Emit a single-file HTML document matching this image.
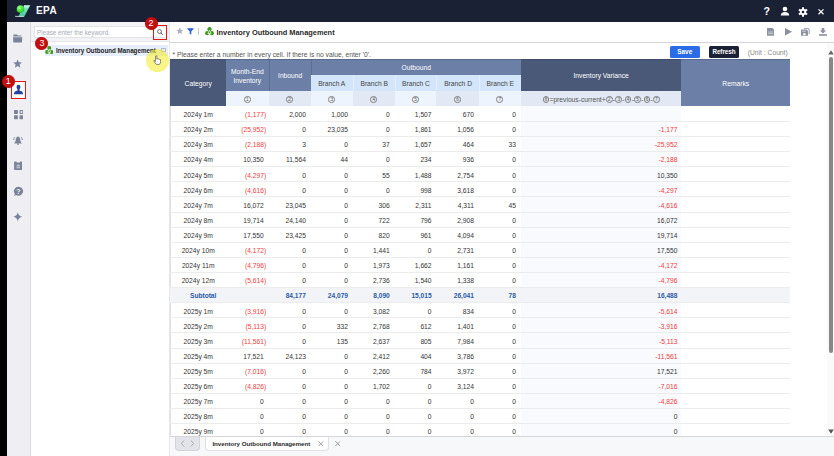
<!DOCTYPE html>
<html><head><meta charset="utf-8">
<style>
*{box-sizing:border-box}
html,body{margin:0;padding:0}
body{width:834px;height:456px;overflow:hidden;position:relative;background:#fff;font-family:"Liberation Sans",sans-serif;color:#333}
.abs{position:absolute}
#blk{left:0;top:0;width:7px;height:456px;background:#000}
#hdr{left:7px;top:0;width:827px;height:21.7px;background:#1b2135}
#epa{left:36px;top:5.4px;font-size:10px;font-weight:bold;color:#fff;letter-spacing:0.45px}
#side{left:7px;top:21.7px;width:23px;height:435px;background:#eeeef3}
#sideb{left:29.9px;top:21.7px;width:1px;height:435px;background:#d9dae0}
#spanel{left:30.9px;top:21.7px;width:138.4px;height:435px;background:#fff}
#sbar{left:30.9px;top:21.7px;width:138.4px;height:19px;background:#f3f3f6}
#sinput{left:33.5px;top:25.6px;width:133.5px;height:12.6px;background:#fff;border:1px solid #e2e3e8;font-size:6.3px;color:#a8abb5;padding:2.4px 0 0 2.6px}
#tree{left:45px;top:44.8px;width:122.6px;height:11.7px;background:#e7eefb}
#treet{left:56px;top:46.8px;font-size:6.27px;font-weight:bold;color:#222}
#vsep{left:169.2px;top:21.7px;width:1.2px;height:435px;background:#e6e7eb}
#tbar{left:170.4px;top:41.6px;width:664px;height:1.2px;background:#d4d5da}
#title{left:216.5px;top:27.6px;font-size:7.41px;font-weight:bold;color:#2a2a2a}
#note{left:172.5px;top:50.8px;font-size:6.75px;color:#555}
#save{left:669.8px;top:46.3px;width:29.9px;height:11.4px;background:#2b6ce6;border-radius:1.5px;color:#fff;font-size:6.5px;font-weight:bold;text-align:center;line-height:11.4px}
#refresh{left:709px;top:46.3px;width:29.9px;height:11.4px;background:#1b2135;border-radius:1.5px;color:#fff;font-size:6.3px;text-align:center;line-height:11.6px;font-weight:bold;letter-spacing:-0.05px}
#unit{left:747.7px;top:48.9px;font-size:6.74px;color:#888}
/* table */
#thead{left:170.4px;top:59.2px;width:619.6px;height:47.1px}
.h{position:absolute;color:#fff;font-size:6.7px;text-align:center;display:flex;align-items:center;justify-content:center;line-height:1.35;padding-top:1.4px}
.dk{background:#4a5977}
.md{background:#6c80a7}
.lt{background:#d3e5fa;color:#444}
.cl{background:#edf4fd;color:#555}
.cd{background:#e2e9f4;color:#555}
#tbody{left:170.4px;top:106.3px;width:619.6px;height:330px;overflow:hidden}
table{border-collapse:collapse;table-layout:fixed;width:619.6px}
td{height:15.115px;padding:2.1px 0 0 0;font-size:6.7px;color:#333;border-bottom:1px solid #ececef;white-space:nowrap;overflow:hidden;line-height:11.6px}
td.c0{text-align:center}
td.n{text-align:right;padding-right:4.8px}
td.me.neg{padding-right:2.4px}
td.neg{color:#f23b3b}
td.var{background:#f8fafe;padding-right:4px}
tr.sub td{background:#f3f4f7;color:#2b5aa8;font-weight:bold;font-size:6.6px}
.ci{display:inline-block;width:6.6px;height:6.6px;border:0.8px solid #808080;border-radius:50%;font-size:4.6px;line-height:5.1px;text-align:center;color:#555;vertical-align:middle;margin:0 0.3px;position:relative;top:0.3px}
#tleft{left:169.6px;top:105.7px;width:1px;height:330px;background:#e0e0e4}
#bbar{left:170.4px;top:435.5px;width:664px;height:20.5px;background:#f7f8fa;border-top:1.6px solid #d6d7dc}
#scrtrack{left:827px;top:43px;width:7px;height:392.5px;background:#fafafa}
#thumb{left:828.7px;top:57px;width:4.1px;height:296px;background:#888;border-radius:2px}
.badge{position:absolute;width:13px;height:13px;border-radius:50%;background:#c30f0f;color:#fff;font-size:9px;text-align:center;line-height:13px;box-shadow:0 0 1px rgba(0,0,0,.4)}
.rbox{position:absolute;border:1.3px solid #e01818}
#yellow{left:146px;top:48.5px;width:23.2px;height:23.2px;border-radius:50%;background:rgba(243,236,40,0.56)}
</style></head><body>
<div id="blk" class="abs"></div>
<div id="hdr" class="abs"></div>
<svg class="abs" style="left:12px;top:2px" width="22" height="18" viewBox="0 0 22 18">
 <defs><linearGradient id="lg" x1="0" y1="0" x2="0" y2="1"><stop offset="0" stop-color="#e6fff6"/><stop offset="0.25" stop-color="#7fe3c4"/><stop offset="1" stop-color="#3cc79a"/></linearGradient>
 <radialGradient id="rg" cx="0.35" cy="0.3" r="0.75"><stop offset="0" stop-color="#c8ffb8"/><stop offset="0.35" stop-color="#5af04a"/><stop offset="1" stop-color="#2cbf2a"/></radialGradient></defs>
 <path d="M12.2 3.3 L18.2 3.3 L12.2 14.7 L6.3 14.7 Z" fill="url(#lg)"/>
 <rect x="3.2" y="13.9" width="8.6" height="0.9" fill="#d8dce6"/>
 <circle cx="8.5" cy="7.1" r="3.8" fill="url(#rg)"/>
</svg>
<div id="epa" class="abs">EPA</div>
<!-- header right icons -->
<div class="abs" style="left:763.4px;top:5.2px;font-size:10.6px;font-weight:bold;color:#fff">?</div>
<svg class="abs" style="left:779.5px;top:6px" width="10" height="10" viewBox="0 0 10 10"><circle cx="5" cy="3" r="2.3" fill="#fff"/><path d="M0.8 9.5 Q0.8 6 5 6 Q9.2 6 9.2 9.5 Z" fill="#fff"/></svg>
<svg class="abs" style="left:797.5px;top:6.6px" width="10" height="10" viewBox="0 0 10 10"><g fill="#fff"><circle cx="5" cy="5" r="3.2"/><rect x="4" y="0.3" width="2" height="9.4"/><rect x="4" y="0.3" width="2" height="9.4" transform="rotate(60 5 5)"/><rect x="4" y="0.3" width="2" height="9.4" transform="rotate(120 5 5)"/></g><circle cx="5" cy="5" r="1.3" fill="#1b2135"/></svg>
<svg class="abs" style="left:817.8px;top:9px" width="6" height="5.6" viewBox="0 0 6 5.6"><path d="M0.5 0.4L5.5 5.2M5.5 0.4L0.5 5.2" stroke="#fff" stroke-width="1.2"/></svg>

<div id="side" class="abs"></div>
<div id="sideb" class="abs"></div>
<!-- sidebar icons -->
<svg class="abs" style="left:13.3px;top:33.6px" width="9.5" height="9" viewBox="0 0 9.5 9"><path d="M0.4 0.4 H3.9 L4.8 1.4 H8.4 V2.6 H0.4Z M0 3.2 H9.3 L8.9 8.5 H0.4Z" fill="#7b8399"/></svg>
<svg class="abs" style="left:13.3px;top:59.2px" width="9.2" height="9.2" viewBox="0 0 24 24"><path d="M12 1 L15.2 8.6 L23.3 9.2 L17.1 14.5 L19.1 22.6 L12 18.2 L4.9 22.6 L6.9 14.5 L0.7 9.2 L8.8 8.6Z" fill="#7b8399"/></svg>
<div class="abs" style="left:11px;top:81px;width:15px;height:17.7px;background:#fff;border:1.3px solid #e01818"></div>
<svg class="abs" style="left:13px;top:84px" width="11" height="11" viewBox="0 0 11 11"><ellipse cx="5.5" cy="3.1" rx="2" ry="2.4" fill="#2442a0"/><path d="M4.5 5 H6.5 V6.4 Q9.8 6.9 10 9.8 V10.2 H1 V9.8 Q1.2 6.9 4.5 6.4Z" fill="#2442a0"/></svg>
<svg class="abs" style="left:13.5px;top:110.4px" width="9.4" height="9.2" viewBox="0 0 9.4 9.2"><g fill="#7b8399"><rect x="0" y="0" width="3.9" height="3.9" rx="0.6"/><rect x="5.5" y="0" width="3.9" height="3.9" rx="1"/><rect x="0" y="5.3" width="3.9" height="3.9" rx="0.6"/><rect x="5.5" y="5.3" width="3.9" height="3.9" rx="0.6"/></g><circle cx="7.45" cy="1.95" r="1" fill="#eeeef3"/></svg>
<svg class="abs" style="left:12.8px;top:135.6px" width="10" height="9.5" viewBox="0 0 10 9.5"><path d="M5 0.6 Q6.6 0.6 7.1 3 L7.6 5.6 L8.8 7.4 H1.2 L2.4 5.6 L2.9 3 Q3.4 0.6 5 0.6Z" fill="#7b8399"/><rect x="4.2" y="7.4" width="1.6" height="1.4" fill="#7b8399"/><path d="M1.9 1.2 Q0.8 2.3 0.7 4 M8.1 1.2 Q9.2 2.3 9.3 4" stroke="#7b8399" stroke-width="0.9" fill="none"/></svg>
<svg class="abs" style="left:13.8px;top:161.4px" width="8.6" height="9" viewBox="0 0 8.6 9"><path d="M0.8 0.6 H2.6 V1.5 H6 V0.6 H7.8 Q8.5 0.6 8.5 1.3 V8.2 Q8.5 8.9 7.8 8.9 H0.8 Q0.1 8.9 0.1 8.2 V1.3 Q0.1 0.6 0.8 0.6Z" fill="#7b8399"/><rect x="2.6" y="3.6" width="3.4" height="3.8" fill="#b9bdca"/><rect x="2.6" y="5.2" width="3.4" height="0.4" fill="#8d94a8"/></svg>
<svg class="abs" style="left:12.5px;top:185.8px" width="11" height="11" viewBox="0 0 11 11"><path d="M5.5 0.8 A4.5 4.5 0 1 1 3 9 L1.2 10.3 L1.8 8 A4.5 4.5 0 0 1 5.5 0.8Z" fill="#7b8399"/><text x="5.5" y="8" font-size="7" font-weight="bold" fill="#eeeef3" text-anchor="middle" font-family="Liberation Sans">?</text></svg>
<svg class="abs" style="left:13px;top:212.3px" width="9.6" height="9.6" viewBox="0 0 11 11"><path d="M5.5 0.3 Q6.3 4.7 10.7 5.5 Q6.3 6.3 5.5 10.7 Q4.7 6.3 0.3 5.5 Q4.7 4.7 5.5 0.3Z" fill="#7b8399"/></svg>

<div id="spanel" class="abs"></div>
<div id="sbar" class="abs"></div>
<div id="sinput" class="abs">Please enter the keyword.</div>
<div class="abs" style="left:30.9px;top:40.7px;width:138.4px;height:1px;background:#e4e5ea"></div>
<svg class="abs" style="left:156.8px;top:29.4px" width="6.2" height="6.2" viewBox="0 0 8 8"><circle cx="3.3" cy="3.3" r="2.5" fill="none" stroke="#555" stroke-width="1.1"/><path d="M5.1 5.1L7.5 7.5" stroke="#555" stroke-width="1.2"/></svg>
<div id="tree" class="abs"></div>
<svg class="abs" style="left:44.8px;top:45.9px" width="8.6" height="8.2" viewBox="0 0 9 8.6"><g fill="#3c9a1c"><circle cx="4.5" cy="2.2" r="2.1"/><circle cx="2.2" cy="6.2" r="2.1"/><circle cx="6.8" cy="6.2" r="2.1"/><path d="M4.5 2.2 L6.8 6.2 H2.2Z"/></g><path d="M4.5 3.3 L6.1 6.5 H2.9Z" fill="none" stroke="#e4f3dc" stroke-width="0.85"/></svg>
<div id="treet" class="abs">Inventory Outbound Management</div>
<div class="abs" style="left:160.7px;top:48.4px;width:5px;height:4px;border:0.8px solid #b8bcc6;background:#e8eaf0"></div>

<div id="vsep" class="abs"></div>
<!-- toolbar -->
<svg class="abs" style="left:175.6px;top:27.3px" width="7.6" height="7.6" viewBox="0 0 24 24"><path d="M12 1 L15.2 8.6 L23.3 9.2 L17.1 14.5 L19.1 22.6 L12 18.2 L4.9 22.6 L6.9 14.5 L0.7 9.2 L8.8 8.6Z" fill="#aeb1bb"/></svg>
<svg class="abs" style="left:186.6px;top:27.8px" width="7" height="7" viewBox="0 0 7 7"><path d="M0.6 0.2H6.4Q6.9 0.2 6.7 0.8L4.3 3.4V6.6L2.7 5.9V3.4L0.3 0.8Q0.1 0.2 0.6 0.2Z" fill="#2d5fe0"/></svg>
<div class="abs" style="left:198.2px;top:28px;width:0.8px;height:6.5px;background:#c5c7cf"></div>
<svg class="abs" style="left:204.5px;top:27.2px" width="9" height="8.6" viewBox="0 0 9 8.6"><g fill="#3c9a1c"><circle cx="4.5" cy="2.2" r="2.1"/><circle cx="2.2" cy="6.2" r="2.1"/><circle cx="6.8" cy="6.2" r="2.1"/><path d="M4.5 2.2 L6.8 6.2 H2.2Z"/></g><path d="M4.5 3.3 L6.1 6.5 H2.9Z" fill="none" stroke="#e4f3dc" stroke-width="0.85"/></svg>
<div id="title" class="abs">Inventory Outbound Management</div>
<!-- toolbar right icons -->
<svg class="abs" style="left:766.7px;top:27.9px" width="7.4" height="7.8" viewBox="0 0 7.4 7.8"><path d="M0.6 0 H5.4 L7.4 2 V7.2 Q7.4 7.8 6.8 7.8 H0.6 Q0 7.8 0 7.2 V0.6 Q0 0 0.6 0Z" fill="#8d909e"/><rect x="1.2" y="3.6" width="5" height="0.8" fill="#d6d8de"/><rect x="1.2" y="5.3" width="5" height="0.8" fill="#d6d8de"/></svg>
<svg class="abs" style="left:784.9px;top:28.2px" width="7" height="7.6" viewBox="0 0 7 7.6"><path d="M0 0 L7 3.8 L0 7.6Z" fill="#8d909e"/></svg>
<svg class="abs" style="left:801.3px;top:27.9px" width="8.8" height="7.8" viewBox="0 0 8.8 7.8"><path d="M3 0 H7.4 L8.8 1.4 V6 H7.6 V2 L6.6 1.1 H3Z" fill="#a9acb8"/><path d="M0.6 1.6 H5.6 L7 3 V7.2 Q7 7.8 6.4 7.8 H0.6 Q0 7.8 0 7.2 V2.2 Q0 1.6 0.6 1.6Z" fill="#8d909e"/><rect x="2.2" y="5.2" width="2.4" height="2" fill="#fff"/><rect x="1.2" y="2.6" width="3.4" height="1.2" fill="#c9cbd3"/></svg>
<svg class="abs" style="left:819px;top:27.9px" width="8" height="7.8" viewBox="0 0 8 7.8"><path d="M2.7 0 H5.3 V2.6 H7.2 L4 5.6 L0.8 2.6 H2.7Z" fill="#8d909e"/><rect x="0" y="6.2" width="8" height="1.6" fill="#8d909e"/></svg>
<div id="tbar" class="abs"></div>

<div id="note" class="abs">* Please enter a number in every cell. If there is no value, enter '0'.</div>
<div id="save" class="abs">Save</div>
<div id="refresh" class="abs">Refresh</div>
<div id="unit" class="abs">(Unit : Count)</div>

<div id="thead" class="abs">
 <div class="h dk" style="left:0;top:0;width:55.6px;height:47.1px">Category</div>
 <div class="h md" style="left:55.6px;top:0;width:42.6px;height:31.6px">Month-End<br>Inventory</div>
 <div class="h md" style="left:98.2px;top:0;width:42.1px;height:31.6px;border-left:0.6px solid #5d6e96">Inbound</div>
 <div class="h md" style="left:140.3px;top:0;width:210.1px;height:15.6px;border-left:0.6px solid #5d6e96">Outbound</div>
 <div class="h lt" style="left:140.3px;top:15.6px;width:42.1px;height:16px">Branch A</div>
 <div class="h lt" style="left:182.4px;top:15.6px;width:41.8px;height:16px;border-left:0.6px solid #e4eefb">Branch B</div>
 <div class="h lt" style="left:224.2px;top:15.6px;width:41.8px;height:16px;border-left:0.6px solid #e4eefb">Branch C</div>
 <div class="h lt" style="left:266px;top:15.6px;width:42.4px;height:16px;border-left:0.6px solid #e4eefb">Branch D</div>
 <div class="h lt" style="left:308.4px;top:15.6px;width:42px;height:16px;border-left:0.6px solid #e4eefb">Branch E</div>
 <div class="h dk" style="left:350.4px;top:0;width:160.7px;height:31.6px">Inventory Variance</div>
 <div class="h md" style="left:511.1px;top:0;width:108.5px;height:47.1px">Remarks</div>
 <div class="abs" style="left:0;top:0;width:619.6px;height:1.1px;background:rgba(20,30,60,0.22);z-index:2"></div>
 <div class="h cl" style="left:55.6px;top:31.6px;width:42.6px;height:15.5px"><span class="ci">1</span></div>
 <div class="h cd" style="left:98.2px;top:31.6px;width:42.1px;height:15.5px"><span class="ci">2</span></div>
 <div class="h cl" style="left:140.3px;top:31.6px;width:42.1px;height:15.5px"><span class="ci">3</span></div>
 <div class="h cd" style="left:182.4px;top:31.6px;width:41.8px;height:15.5px"><span class="ci">4</span></div>
 <div class="h cl" style="left:224.2px;top:31.6px;width:41.8px;height:15.5px"><span class="ci">5</span></div>
 <div class="h cd" style="left:266px;top:31.6px;width:42.4px;height:15.5px"><span class="ci">6</span></div>
 <div class="h cl" style="left:308.4px;top:31.6px;width:42px;height:15.5px"><span class="ci">7</span></div>
 <div class="h cd" style="left:350.4px;top:31.6px;width:160.7px;height:15.5px"><span class="ci">8</span>=previous-current+<span class="ci">2</span>-<span class="ci">3</span>-<span class="ci">4</span>-<span class="ci">5</span>-<span class="ci">6</span>-<span class="ci">7</span></div>
</div>

<div id="tleft" class="abs"></div>
<div id="tbody" class="abs">
<table>
<colgroup><col style="width:55.6px"><col style="width:42.6px"><col style="width:42.1px"><col style="width:42.1px"><col style="width:41.8px"><col style="width:41.8px"><col style="width:42.4px"><col style="width:42px"><col style="width:160.7px"><col style="width:108.5px"></colgroup>
<tr><td class="c0">2024y 1m</td><td class="n me neg">(1,177)</td><td class="n">2,000</td><td class="n">1,000</td><td class="n">0</td><td class="n">1,507</td><td class="n">670</td><td class="n">0</td><td class="n var"></td><td class="rem"></td></tr>
<tr><td class="c0">2024y 2m</td><td class="n me neg">(25,952)</td><td class="n">0</td><td class="n">23,035</td><td class="n">0</td><td class="n">1,861</td><td class="n">1,056</td><td class="n">0</td><td class="n var neg">-1,177</td><td class="rem"></td></tr>
<tr><td class="c0">2024y 3m</td><td class="n me neg">(2,188)</td><td class="n">3</td><td class="n">0</td><td class="n">37</td><td class="n">1,657</td><td class="n">464</td><td class="n">33</td><td class="n var neg">-25,952</td><td class="rem"></td></tr>
<tr><td class="c0">2024y 4m</td><td class="n me">10,350</td><td class="n">11,564</td><td class="n">44</td><td class="n">0</td><td class="n">234</td><td class="n">936</td><td class="n">0</td><td class="n var neg">-2,188</td><td class="rem"></td></tr>
<tr><td class="c0">2024y 5m</td><td class="n me neg">(4,297)</td><td class="n">0</td><td class="n">0</td><td class="n">55</td><td class="n">1,488</td><td class="n">2,754</td><td class="n">0</td><td class="n var">10,350</td><td class="rem"></td></tr>
<tr><td class="c0">2024y 6m</td><td class="n me neg">(4,616)</td><td class="n">0</td><td class="n">0</td><td class="n">0</td><td class="n">998</td><td class="n">3,618</td><td class="n">0</td><td class="n var neg">-4,297</td><td class="rem"></td></tr>
<tr><td class="c0">2024y 7m</td><td class="n me">16,072</td><td class="n">23,045</td><td class="n">0</td><td class="n">306</td><td class="n">2,311</td><td class="n">4,311</td><td class="n">45</td><td class="n var neg">-4,616</td><td class="rem"></td></tr>
<tr><td class="c0">2024y 8m</td><td class="n me">19,714</td><td class="n">24,140</td><td class="n">0</td><td class="n">722</td><td class="n">796</td><td class="n">2,908</td><td class="n">0</td><td class="n var">16,072</td><td class="rem"></td></tr>
<tr><td class="c0">2024y 9m</td><td class="n me">17,550</td><td class="n">23,425</td><td class="n">0</td><td class="n">820</td><td class="n">961</td><td class="n">4,094</td><td class="n">0</td><td class="n var">19,714</td><td class="rem"></td></tr>
<tr><td class="c0">2024y 10m</td><td class="n me neg">(4,172)</td><td class="n">0</td><td class="n">0</td><td class="n">1,441</td><td class="n">0</td><td class="n">2,731</td><td class="n">0</td><td class="n var">17,550</td><td class="rem"></td></tr>
<tr><td class="c0">2024y 11m</td><td class="n me neg">(4,796)</td><td class="n">0</td><td class="n">0</td><td class="n">1,973</td><td class="n">1,662</td><td class="n">1,161</td><td class="n">0</td><td class="n var neg">-4,172</td><td class="rem"></td></tr>
<tr><td class="c0">2024y 12m</td><td class="n me neg">(5,614)</td><td class="n">0</td><td class="n">0</td><td class="n">2,736</td><td class="n">1,540</td><td class="n">1,338</td><td class="n">0</td><td class="n var neg">-4,796</td><td class="rem"></td></tr>
<tr class="sub"><td class="c0" style="padding-left:10px">Subtotal</td><td class="n me"></td><td class="n">84,177</td><td class="n">24,079</td><td class="n">8,090</td><td class="n">15,015</td><td class="n">26,041</td><td class="n">78</td><td class="n var">16,488</td><td class="rem"></td></tr>
<tr><td class="c0">2025y 1m</td><td class="n me neg">(3,916)</td><td class="n">0</td><td class="n">0</td><td class="n">3,082</td><td class="n">0</td><td class="n">834</td><td class="n">0</td><td class="n var neg">-5,614</td><td class="rem"></td></tr>
<tr><td class="c0">2025y 2m</td><td class="n me neg">(5,113)</td><td class="n">0</td><td class="n">332</td><td class="n">2,768</td><td class="n">612</td><td class="n">1,401</td><td class="n">0</td><td class="n var neg">-3,916</td><td class="rem"></td></tr>
<tr><td class="c0">2025y 3m</td><td class="n me neg">(11,561)</td><td class="n">0</td><td class="n">135</td><td class="n">2,637</td><td class="n">805</td><td class="n">7,984</td><td class="n">0</td><td class="n var neg">-5,113</td><td class="rem"></td></tr>
<tr><td class="c0">2025y 4m</td><td class="n me">17,521</td><td class="n">24,123</td><td class="n">0</td><td class="n">2,412</td><td class="n">404</td><td class="n">3,786</td><td class="n">0</td><td class="n var neg">-11,561</td><td class="rem"></td></tr>
<tr><td class="c0">2025y 5m</td><td class="n me neg">(7,016)</td><td class="n">0</td><td class="n">0</td><td class="n">2,260</td><td class="n">784</td><td class="n">3,972</td><td class="n">0</td><td class="n var">17,521</td><td class="rem"></td></tr>
<tr><td class="c0">2025y 6m</td><td class="n me neg">(4,826)</td><td class="n">0</td><td class="n">0</td><td class="n">1,702</td><td class="n">0</td><td class="n">3,124</td><td class="n">0</td><td class="n var neg">-7,016</td><td class="rem"></td></tr>
<tr><td class="c0">2025y 7m</td><td class="n me">0</td><td class="n">0</td><td class="n">0</td><td class="n">0</td><td class="n">0</td><td class="n">0</td><td class="n">0</td><td class="n var neg">-4,826</td><td class="rem"></td></tr>
<tr><td class="c0">2025y 8m</td><td class="n me">0</td><td class="n">0</td><td class="n">0</td><td class="n">0</td><td class="n">0</td><td class="n">0</td><td class="n">0</td><td class="n var">0</td><td class="rem"></td></tr>
<tr><td class="c0">2025y 9m</td><td class="n me">0</td><td class="n">0</td><td class="n">0</td><td class="n">0</td><td class="n">0</td><td class="n">0</td><td class="n">0</td><td class="n var">0</td><td class="rem"></td></tr>
</table>
</div>
<div id="scrtrack" class="abs"></div>
<svg class="abs" style="left:827.5px;top:49.5px" width="6" height="5" viewBox="0 0 6 5"><path d="M3 0.3L5.8 4.5H0.2Z" fill="#666"/></svg>
<div id="thumb" class="abs"></div>
<svg class="abs" style="left:827.5px;top:429px" width="6" height="5" viewBox="0 0 6 5"><path d="M3 4.7L5.8 0.5H0.2Z" fill="#555"/></svg>

<div id="bbar" class="abs"></div>
<div class="abs" style="left:175px;top:436.5px;width:24.7px;height:14.5px;background:#e3e4ea;border:0.8px solid #d3d4da;border-top:none;border-radius:0 0 4px 4px"></div>
<svg class="abs" style="left:180px;top:440px" width="16" height="7" viewBox="0 0 16 7"><path d="M4 0.5L1.5 3.5L4 6.5M11 0.5L13.5 3.5L11 6.5" fill="none" stroke="#9a9da8" stroke-width="0.8"/></svg>
<div class="abs" style="left:205.3px;top:436.5px;width:123.7px;height:14.5px;background:#fff;border:0.8px solid #e0e1e6;border-top:none;border-radius:0 0 4px 4px"></div>
<div class="abs" style="left:212.4px;top:439.8px;font-size:6.2px;font-weight:bold;color:#2a2a2a;letter-spacing:-0.03px">Inventory Outbound Management</div>
<svg class="abs" style="left:318.3px;top:440.6px" width="5.6" height="5.6" viewBox="0 0 7 7"><path d="M0.5 0.5L6.5 6.5M6.5 0.5L0.5 6.5" stroke="#888" stroke-width="1"/></svg>
<svg class="abs" style="left:334.6px;top:440.6px" width="5.6" height="5.6" viewBox="0 0 7 7"><path d="M0.5 0.5L6.5 6.5M6.5 0.5L0.5 6.5" stroke="#888" stroke-width="1"/></svg>

<!-- annotations -->
<div id="yellow" class="abs"></div>
<svg class="abs" style="left:152.6px;top:54.9px" width="8.8" height="10.2" viewBox="0 0 11 13"><path d="M3.2 1.2 Q4.2 0.4 4.8 1.2 V5.2 Q5.6 4.6 6.4 5.3 Q7.2 4.8 8 5.6 Q8.8 5.2 9.5 6 V9 Q9.5 11.5 7.5 12.2 H5 Q3.5 11.8 2.6 10.2 L1 7.6 Q0.8 6.8 1.6 6.8 L3.2 8.2Z" fill="#fff" stroke="#333" stroke-width="0.7"/></svg>
<div class="rbox" style="left:153.1px;top:25.1px;width:14.4px;height:14.5px"></div>
<div class="badge" style="left:1.7px;top:75px">1</div>
<div class="badge" style="left:144.5px;top:16.7px">2</div>
<div class="badge" style="left:35.4px;top:37.4px">3</div>
</body></html>
